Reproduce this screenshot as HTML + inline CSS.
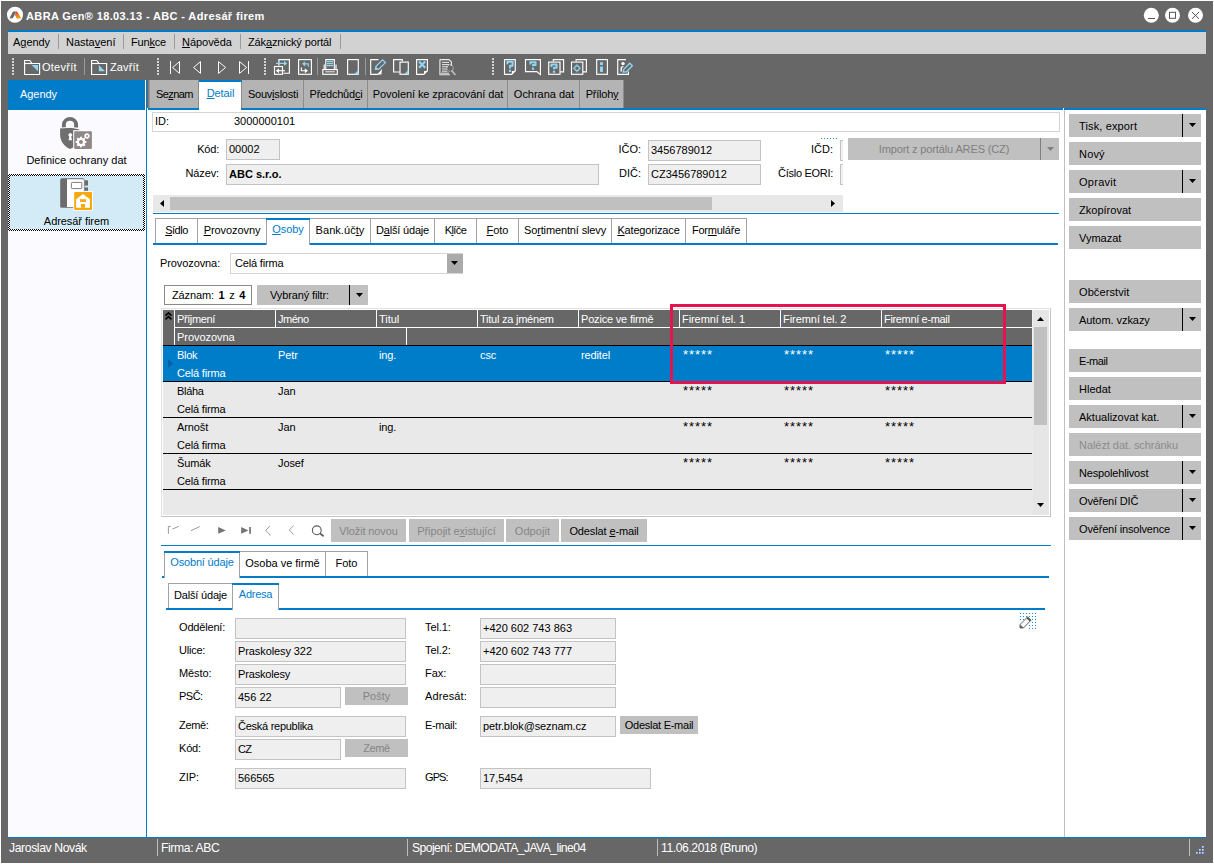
<!DOCTYPE html>
<html><head><meta charset="utf-8"><title>ABRA Gen</title><style>
html,body{margin:0;padding:0;}
body{width:1214px;height:864px;position:relative;overflow:hidden;background:#fff;font-family:"Liberation Sans",sans-serif;font-size:11px;line-height:13px;color:#000;}
.a{position:absolute;box-sizing:border-box;}
.t{position:absolute;white-space:pre;line-height:13px;height:13px;}
svg{position:absolute;overflow:visible;}
u{text-decoration:underline;text-underline-offset:1px;}
</style></head><body>
<div class="a " style="left:0px;top:0px;width:1214px;height:864px;background:#fff;"></div>
<div class="a " style="left:1px;top:1px;width:1212px;height:862px;background:#676767;"></div>
<div class="a " style="left:8px;top:30px;width:1198px;height:2px;background:#007cc9;"></div>
<div class="a " style="left:8px;top:32px;width:1198px;height:22px;background:#d2d2d2;"></div>
<div class="t" style="left:13px;top:36px;color:#000;letter-spacing:-0.051px;">A<u>g</u>endy</div>
<div class="t" style="left:66px;top:36px;color:#000;letter-spacing:-0.003px;">Nasta<u>v</u>ení</div>
<div class="t" style="left:131px;top:36px;color:#000;letter-spacing:-0.179px;">Fun<u>k</u>ce</div>
<div class="t" style="left:182px;top:36px;color:#000;letter-spacing:-0.044px;"><u>N</u>ápověda</div>
<div class="t" style="left:248px;top:36px;color:#000;letter-spacing:-0.129px;">Zák<u>a</u>znický portál</div>
<div class="a " style="left:58px;top:34px;width:1px;height:15px;background:#9a9a9a;"></div>
<div class="a " style="left:123px;top:34px;width:1px;height:15px;background:#9a9a9a;"></div>
<div class="a " style="left:174px;top:34px;width:1px;height:15px;background:#9a9a9a;"></div>
<div class="a " style="left:240px;top:34px;width:1px;height:15px;background:#9a9a9a;"></div>
<div class="a " style="left:340px;top:34px;width:1px;height:15px;background:#9a9a9a;"></div>
<div class="t" style="left:26px;top:10px;color:#fff;letter-spacing:0.37px;font-weight:bold;">ABRA Gen® 18.03.13 - ABC - Adresář firem</div>
<svg style="left:5px;top:5px" width="20" height="20" viewBox="5 5 20 20"><defs><linearGradient id="lg" x1="0" y1="0" x2="0.35" y2="1"><stop offset="0" stop-color="#e5007d"/><stop offset="0.45" stop-color="#f0701c"/><stop offset="1" stop-color="#f6a800"/></linearGradient></defs><circle cx="15" cy="14.8" r="8.05" fill="#fff"/><path d="M9.4 18.3 L13.1 11.6 H16.4 L12.8 18.3 Z" fill="#6a6a6a"/><path d="M16.4 11.6 L17.3 11.8 L21.1 18.3 L17 18.8 L14.9 15 Z" fill="url(#lg)"/></svg>
<svg style="left:1140px;top:4px" width="70" height="24" viewBox="1140 4 70 24" fill="none" stroke="#555" stroke-width="1"><circle cx="1151.3" cy="15.3" r="7.5" fill="#fff" stroke="none"/><path d="M1148 18.5 H1155"/><circle cx="1172.5" cy="15.3" r="7.5" fill="#fff" stroke="none"/><rect x="1169.5" y="12.3" width="6" height="6"/><circle cx="1195.5" cy="15.3" r="7.5" fill="#fff" stroke="none"/><path d="M1192 12 L1199 18.8 M1199 12 L1192 18.8"/></svg>
<div class="a" style="left:12px;top:58px;width:2px;height:17px;background:repeating-linear-gradient(to bottom,#d2d2d2 0 2px,transparent 2px 3px)"></div>
<div class="a" style="left:157px;top:58px;width:2px;height:17px;background:repeating-linear-gradient(to bottom,#d2d2d2 0 2px,transparent 2px 3px)"></div>
<div class="a" style="left:264px;top:58px;width:2px;height:17px;background:repeating-linear-gradient(to bottom,#d2d2d2 0 2px,transparent 2px 3px)"></div>
<div class="a" style="left:492px;top:58px;width:2px;height:17px;background:repeating-linear-gradient(to bottom,#d2d2d2 0 2px,transparent 2px 3px)"></div>
<div class="a " style="left:84px;top:58px;width:1px;height:17px;background:#9a9a9a;"></div>
<div class="a " style="left:317px;top:58px;width:1px;height:17px;background:#9a9a9a;"></div>
<div class="a " style="left:365px;top:58px;width:1px;height:17px;background:#9a9a9a;"></div>
<div class="t" style="left:42px;top:61px;color:#fff;letter-spacing:0.256px;">Otevřít</div>
<div class="t" style="left:110px;top:61px;color:#fff;letter-spacing:0.115px;">Zavřít</div>
<svg style="left:0;top:54px" width="1214" height="26" viewBox="0 54 1214 26" fill="none" stroke="#fff" stroke-width="1.15"><path d="M24.6 74.5 V60.5 H29.8 L32 63.5 H39.6 V74.5 Z"/><path d="M24.6 63.5 H32"/><path d="M31.6 65 H38 V71.2 Z" fill="#8fd6f6" stroke="none"/><path d="M91.6 74.5 V60.5 H96.8 L99 63.5 H106.6 V74.5 Z"/><path d="M91.6 63.5 H99"/><path d="M98.8 65 V71.2 H105 Z" fill="#8fd6f6" stroke="none"/><g stroke-width="1"><path d="M170.5 61 V74"/><path d="M179.5 61.6 L172.6 67.5 L179.5 73.4 Z"/><path d="M200.5 61.6 L193.6 67.5 L200.5 73.4 Z"/><path d="M218.5 61.6 L225.6 67.5 L218.5 73.4 Z"/><path d="M248.5 61 V74"/><path d="M239.5 61.6 L246.6 67.5 L239.5 73.4 Z"/></g><path d="M278.9 65.6 V59.6 H289.4 V73.2 H283.4"/><rect x="274.5" y="66.5" width="8" height="7.799999999999997"/><path d="M276 63.4 H285" stroke="#8fd6f6"/><path d="M284 60.8 L287.2 63.4 L284 66 Z" fill="#8fd6f6" stroke="none"/><path d="M278 70.7 H285"/><path d="M279 68.2 L275.8 70.7 L279 73.2 Z" fill="#fff" stroke="none"/><rect x="298.6" y="59.6" width="12.8" height="14.699999999999996"/><path d="M304.5 63.8 H308.3 V66.8" stroke="#8fd6f6"/><path d="M305.2 61.2 L302 63.8 L305.2 66.4 Z" fill="#8fd6f6" stroke="none"/><path d="M301.4 67.4 V70.7 H305.4"/><path d="M304.8 68.2 L308 70.7 L304.8 73.2 Z" fill="#fff" stroke="none"/><path d="M325.8 69 V59.6 H334.3 V69"/><path d="M327 61.6 H333 M327 63.6 H333 M327 65.6 H333" stroke="#8fd6f6" stroke-width="1.1"/><path d="M324.2 69 V64.4 M336 69 V64.4"/><rect x="322.8" y="69.6" width="14.5" height="4.700000000000003"/><path d="M325.3 71.8 H334.8" stroke-width="0.9"/><rect x="347.6" y="59.6" width="10.699999999999989" height="14.699999999999996"/><path d="M358.3 70.1 L354.1 74.3 H358.3 Z" fill="#8fd6f6" stroke="none"/><path d="M378.5 59.6 H370.7 V74.3 H377.8 L381.3 70.8 V69.5"/><path d="M377.6 74.5 L381.5 70.4 V74.5 Z" fill="#fff" stroke="none"/><path d="M375.4 69.4 L376 66.4 L382.6 59.8 L385.4 62.6 L378.8 69.2 Z" fill="none" stroke="#8fd6f6" stroke-width="1.3"/><path d="M375.2 69.6 L375.8 66.4 L378.6 69.2 Z" fill="#8fd6f6" stroke="none"/><path d="M399.6 72 H393.6 V59.6 H402.3 V61.6"/><rect x="400" y="62.1" width="8.300000000000011" height="12.199999999999996"/><path d="M408.3 70.1 L404.1 74.3 H408.3 Z" fill="#8fd6f6" stroke="none"/><path d="M416.6 59.6 H427.4 V70.7 L423.79999999999995 74.3 H416.6 Z"/><path d="M427.59999999999997 70.3 L423.4 74.5 H424.0 L424.0 70.89999999999999 H427.59999999999997 Z" fill="#fff" stroke="none"/><path d="M419 61.4 L425.2 67.8 M425.2 61.4 L419 67.8" stroke="#8fd6f6" stroke-width="2.2"/><g stroke="#e8e8e8"><path d="M439.9 59.6 H449 L451.4 62 V66"/><path d="M439.9 59.6 V74.7 H450"/><path d="M442 62.4 H449 M442 64.6 H449.4 M442 66.8 H448 M442 69 H447 M442 71.2 H447.4 M441 73.2 H449" stroke-width="1"/></g><circle cx="450" cy="68" r="3.2" stroke="#d8d8d8" stroke-width="0.9" stroke-dasharray="1.4 1"/><path d="M451.6 70.4 L455.4 75" stroke="#b9b9b9" stroke-width="1.8"/><path d="M504.5 59.6 H515.3 V70.7 L511.69999999999993 74.3 H504.5 Z"/><path d="M515.5 70.3 L511.29999999999995 74.5 H511.9 L511.9 70.89999999999999 H515.5 Z" fill="#fff" stroke="none"/><path d="M507.4 64.2 V61.8 H512.6 V65.84 H510 V68.4" stroke="#8fd6f6" stroke-width="2" stroke-linejoin="round"/><rect x="508.9" y="69.8" width="2.2" height="2.2" fill="#8fd6f6" stroke="none"/><path d="M525.5 59.6 H540.4 V74.6 L536.8 71.6 H525.5 Z"/><path d="M530.4 64.60000000000001 V62.2 H535.6 V65.07000000000001 H533 V66.2" stroke="#8fd6f6" stroke-width="2" stroke-linejoin="round"/><rect x="531.9" y="67.6" width="2.2" height="2.2" fill="#8fd6f6" stroke="none"/><path d="M553.3 61.6 V59.6 H563.6 V71.8 H560.1"/><rect x="548.7" y="62.1" width="11.3" height="12.199999999999996"/><path d="M551.4 67.0 V64.6 H556.6 V67.74 H554 V69.2" stroke="#8fd6f6" stroke-width="2" stroke-linejoin="round"/><rect x="552.9" y="70.6" width="2.2" height="2.2" fill="#8fd6f6" stroke="none"/><path d="M576.0999999999999 61.6 V59.6 H586.4 V71.8 H582.9"/><rect x="571.5" y="62.1" width="11.3" height="12.199999999999996"/><g stroke="#8fd6f6"><circle cx="577" cy="68.2" r="2.3"/><path d="M577 64.2 V65.6 M577 70.8 V72.2 M573 68.2 H574.4 M579.6 68.2 H581"/></g><rect x="596.7" y="59.6" width="10.7" height="14.699999999999996"/><rect x="600" y="62.2" width="3" height="2.8" fill="#8fd6f6" stroke="none"/><rect x="600" y="66.5" width="3" height="5.4" fill="#8fd6f6" stroke="none"/><path d="M626 59.6 H617.7 V74.3 H628.4 V71.5"/><circle cx="623" cy="63.6" r="1.7" fill="#fff" stroke="none"/><path d="M621.2 71.4 V68.6 Q621.2 66.6 623.4 66.6" stroke-width="1.4"/><path d="M623.2 72 L623.8 69.2 L629.8 63.2 L632.4 65.8 L626.4 71.8 Z" stroke="#8fd6f6" stroke-width="1.3"/></svg>
<div class="a " style="left:8px;top:80px;width:137px;height:30px;background:#007cc9;"></div>
<div class="t" style="left:20px;top:88px;color:#fff;letter-spacing:-0.051px;">Agendy</div>
<div class="a " style="left:8px;top:110px;width:137px;height:727px;background:#fafaff;"></div>
<div class="a " style="left:145px;top:80px;width:1px;height:757px;background:#fff;"></div>
<div class="a " style="left:146px;top:80px;width:1px;height:758px;background:#007cc9;"></div>
<div class="a " style="left:147px;top:108px;width:1px;height:729px;background:#fff;"></div>
<div class="a " style="left:8px;top:174px;width:137px;height:57px;background:repeating-conic-gradient(#000 0 25%,#fff 0 50%) 0 0/2px 2px;"></div>
<div class="a " style="left:10px;top:176px;width:133px;height:53px;background:#d3ebf6;"></div>
<svg style="left:58px;top:114px" width="36" height="36" viewBox="58 114 36 36"><path d="M63.9 128 V124.6 A6.1 5.7 0 0 1 76.1 124.6 V128" fill="none" stroke="#6f6f6f" stroke-width="3.9"/><path d="M60.1 128.6 Q69.5 126.2 79.2 129.4 L79.2 140 Q77 146.4 70 148.9 C64 146.6 60.1 141 60.1 134.5 Z" fill="#6f6f6f"/><path d="M62 127.9 Q70 126.6 78 128.2" stroke="#fff" stroke-width="0.9" fill="none"/><path d="M68.6 140.2 L69.3 136.6 A1.9 1.9 0 1 1 71.3 136.6 L72 140.2 Z" fill="#fff"/><rect x="73.2" y="130.2" width="19.4" height="19.4" fill="#fff"/><rect x="74.2" y="131.2" width="17.7" height="17.7" rx="0.8" fill="#8f8687"/><g transform="translate(81,142)"><circle r="3.1" fill="none" stroke="#fff" stroke-width="2.2"/><rect x="-1" y="-5.3" width="2" height="2.2" fill="#fff" transform="rotate(0)"/><rect x="-1" y="-5.3" width="2" height="2.2" fill="#fff" transform="rotate(45)"/><rect x="-1" y="-5.3" width="2" height="2.2" fill="#fff" transform="rotate(90)"/><rect x="-1" y="-5.3" width="2" height="2.2" fill="#fff" transform="rotate(135)"/><rect x="-1" y="-5.3" width="2" height="2.2" fill="#fff" transform="rotate(180)"/><rect x="-1" y="-5.3" width="2" height="2.2" fill="#fff" transform="rotate(225)"/><rect x="-1" y="-5.3" width="2" height="2.2" fill="#fff" transform="rotate(270)"/><rect x="-1" y="-5.3" width="2" height="2.2" fill="#fff" transform="rotate(315)"/></g><g transform="translate(87,136)"><circle r="1.7" fill="none" stroke="#fff" stroke-width="1.5"/><rect x="-0.5" y="-3" width="1" height="1" fill="#fff" transform="rotate(0)"/><rect x="-0.5" y="-3" width="1" height="1" fill="#fff" transform="rotate(45)"/><rect x="-0.5" y="-3" width="1" height="1" fill="#fff" transform="rotate(90)"/><rect x="-0.5" y="-3" width="1" height="1" fill="#fff" transform="rotate(135)"/><rect x="-0.5" y="-3" width="1" height="1" fill="#fff" transform="rotate(180)"/><rect x="-0.5" y="-3" width="1" height="1" fill="#fff" transform="rotate(225)"/><rect x="-0.5" y="-3" width="1" height="1" fill="#fff" transform="rotate(270)"/><rect x="-0.5" y="-3" width="1" height="1" fill="#fff" transform="rotate(315)"/></g></svg>
<svg style="left:58px;top:176px" width="36" height="36" viewBox="58 176 36 36"><rect x="60.2" y="178.3" width="24.3" height="29.5" rx="1.6" fill="#6d6d6d"/><path d="M67 179.3 H83 Q83.9 179.3 83.9 180.4 V207.1 H67 Z" fill="#fff"/><rect x="84.5" y="180.3" width="3.5" height="5.3" fill="#6d6d6d"/><rect x="84.5" y="187.4" width="3.5" height="3.4" fill="#6d6d6d"/><rect x="71.4" y="182.4" width="10.4" height="6.2" rx="0.9" fill="#fff" stroke="#6d6d6d" stroke-width="0.9"/><rect x="73.2" y="191.2" width="19.6" height="19.4" fill="#fff"/><rect x="74.2" y="192.1" width="17.8" height="17.8" rx="0.9" fill="#f5a90f"/><path d="M83 194 L89.9 199.3 V207.8 H76.1 V199.3 Z" fill="#fff"/><rect x="80" y="199.2" width="6" height="2.7" fill="#f5a90f"/><rect x="81" y="204" width="4" height="3.8" fill="#f5a90f"/></svg>
<div class="t" style="left:8px;top:154px;color:#000;width:137px;text-align:center;letter-spacing:-0.009px;">Definice ochrany dat</div>
<div class="t" style="left:8px;top:215px;color:#000;width:137px;text-align:center;letter-spacing:-0.055px;">Adresář firem</div>
<div class="a " style="left:148px;top:80px;width:476px;height:28px;background:#b4b4b4;"></div>
<div class="a " style="left:148px;top:80px;width:1px;height:28px;background:#7c7c7c;"></div>
<div class="a " style="left:149px;top:80px;width:1px;height:28px;background:#969696;"></div>
<div class="t" style="left:150px;top:88px;color:#000;width:49px;text-align:center;letter-spacing:-0.592px;">Se<u>z</u>nam</div>
<div class="a " style="left:198px;top:80px;width:1px;height:28px;background:#8c8c8c;"></div>
<div class="a " style="left:199px;top:80px;width:42px;height:30px;background:#fff;"></div>
<div class="a " style="left:199px;top:80px;width:43px;height:2px;background:#007cc9;"></div>
<div class="a " style="left:241px;top:82px;width:1px;height:26px;background:#8c8c8c;"></div>
<div class="t" style="left:199px;top:87px;color:#007cc9;width:43px;text-align:center;letter-spacing:-0.087px;"><u>D</u>etail</div>
<div class="t" style="left:242px;top:88px;color:#000;width:62px;text-align:center;letter-spacing:-0.216px;">Souv<u>i</u>slosti</div>
<div class="a " style="left:303px;top:80px;width:1px;height:28px;background:#8c8c8c;"></div>
<div class="t" style="left:304px;top:88px;color:#000;width:64px;text-align:center;letter-spacing:-0.213px;">Předchůd<u>c</u>i</div>
<div class="a " style="left:367px;top:80px;width:1px;height:28px;background:#8c8c8c;"></div>
<div class="t" style="left:368px;top:88px;color:#000;width:140px;text-align:center;letter-spacing:-0.092px;">Povolení ke zpracování dat</div>
<div class="a " style="left:507px;top:80px;width:1px;height:28px;background:#8c8c8c;"></div>
<div class="t" style="left:508px;top:88px;color:#000;width:72px;text-align:center;letter-spacing:-0.022px;">Ochrana dat</div>
<div class="a " style="left:579px;top:80px;width:1px;height:28px;background:#8c8c8c;"></div>
<div class="t" style="left:580px;top:88px;color:#000;width:44px;text-align:center;letter-spacing:-0.234px;">Příloh<u>y</u></div>
<div class="a " style="left:623px;top:80px;width:1px;height:28px;background:#8c8c8c;"></div>
<div class="a " style="left:148px;top:110px;width:916px;height:727px;background:#fff;"></div>
<div class="a " style="left:148px;top:108px;width:51px;height:2px;background:#007cc9;"></div>
<div class="a " style="left:242px;top:108px;width:821px;height:2px;background:#007cc9;"></div>
<div class="a " style="left:1063px;top:108px;width:1px;height:2px;background:#fff;"></div>
<div class="a " style="left:1064px;top:108px;width:142px;height:2px;background:#007cc9;"></div>
<div class="a " style="left:1065px;top:110px;width:141px;height:727px;background:#fff;"></div>
<div class="a " style="left:1064px;top:110px;width:1px;height:727px;background:#c0c0c0;"></div>
<div class="a " style="left:8px;top:837px;width:1198px;height:1px;background:#007cc9;"></div>
<div class="a " style="left:1px;top:838px;width:1212px;height:25px;background:#676767;"></div>
<div class="t" style="left:9px;top:842px;color:#fff;letter-spacing:-0.393px;font-size:12.2px;">Jaroslav Novák</div>
<div class="t" style="left:161px;top:842px;color:#fff;letter-spacing:-0.396px;font-size:12.2px;">Firma: ABC</div>
<div class="t" style="left:412px;top:842px;color:#fff;letter-spacing:-0.569px;font-size:12.2px;">Spojení: DEMODATA_JAVA_line04</div>
<div class="t" style="left:661px;top:842px;color:#fff;letter-spacing:-0.44px;font-size:12.2px;">11.06.2018 (Bruno)</div>
<div class="a " style="left:157px;top:839px;width:1px;height:17px;background:#bdbdbd;"></div>
<div class="a " style="left:407px;top:839px;width:1px;height:17px;background:#bdbdbd;"></div>
<div class="a " style="left:657px;top:839px;width:1px;height:17px;background:#bdbdbd;"></div>
<div class="a " style="left:1189px;top:839px;width:1px;height:17px;background:#bdbdbd;"></div>
<svg style="left:1196px;top:846px" width="8" height="8" viewBox="0 0 8 8"><defs><linearGradient id="gd" x1="0" y1="0" x2="1" y2="1"><stop offset="0" stop-color="#f4f8ff"/><stop offset="1" stop-color="#4f74f2"/></linearGradient></defs><g fill="url(#gd)"><rect x="6" y="0" width="2" height="2"/><rect x="3" y="3" width="2" height="2"/><rect x="6" y="3" width="2" height="2"/><rect x="0" y="6" width="2" height="2"/><rect x="3" y="6" width="2" height="2"/><rect x="6" y="6" width="2" height="2"/></g></svg>
<div class="a " style="left:152px;top:112px;width:908px;height:20px;background:#fff;border:1px solid #d4d4d4;"></div>
<div class="t" style="left:155px;top:115px;color:#000;letter-spacing:0px;">ID:</div>
<div class="t" style="left:234px;top:115px;color:#000;letter-spacing:0px;">3000000101</div>
<div class="t" style="left:150px;top:143px;color:#000;width:69px;text-align:right;letter-spacing:-0.207px;">Kód:</div>
<div class="a " style="left:226px;top:139px;width:54px;height:21px;background:#efefef;border:1px solid #c3c3c3;"></div>
<div class="t" style="left:229px;top:143px;color:#000;letter-spacing:0px;">00002</div>
<div class="t" style="left:150px;top:167px;color:#000;width:69px;text-align:right;letter-spacing:-0.12px;">Název:</div>
<div class="a " style="left:226px;top:164px;width:373px;height:21px;background:#efefef;border:1px solid #c3c3c3;"></div>
<div class="t" style="left:229px;top:168px;color:#000;font-weight:bold;">ABC s.r.o.</div>
<div class="t" style="left:571px;top:143px;color:#000;width:70px;text-align:right;letter-spacing:0px;">IČO:</div>
<div class="a " style="left:648px;top:140px;width:113px;height:21px;background:#efefef;border:1px solid #c3c3c3;"></div>
<div class="t" style="left:651px;top:144px;color:#000;letter-spacing:0px;">3456789012</div>
<div class="t" style="left:571px;top:167px;color:#000;width:70px;text-align:right;letter-spacing:0px;">DIČ:</div>
<div class="a " style="left:648px;top:164px;width:113px;height:21px;background:#efefef;border:1px solid #c3c3c3;"></div>
<div class="t" style="left:651px;top:168px;color:#000;letter-spacing:0px;">CZ3456789012</div>
<div class="t" style="left:760px;top:143px;color:#000;width:73px;text-align:right;letter-spacing:0px;">IČD:</div>
<div class="t" style="left:760px;top:167px;color:#000;width:73px;text-align:right;letter-spacing:-0.288px;">Číslo EORI:</div>
<div class="a " style="left:840px;top:140px;width:3px;height:21px;background:#efefef;border-left:1px solid #c3c3c3;border-top:1px solid #c3c3c3;border-bottom:1px solid #c3c3c3;"></div>
<div class="a " style="left:840px;top:164px;width:3px;height:21px;background:#efefef;border-left:1px solid #c3c3c3;border-top:1px solid #c3c3c3;border-bottom:1px solid #c3c3c3;"></div>
<div class="a" style="left:821px;top:138px;width:16px;height:1px;background:repeating-linear-gradient(to right,#1b8ad8 0 1px,transparent 1px 3px)"></div>
<div class="a " style="left:848px;top:138px;width:211px;height:22px;background:#c0c0c0;"></div>
<div class="t" style="left:848px;top:143px;color:#7f7f7f;width:192px;text-align:center;letter-spacing:-0.13px;">Import z portálu ARES (CZ)</div>
<div class="a " style="left:1040px;top:138px;width:1px;height:22px;background:#7f7f7f;"></div>
<svg style="left:1047px;top:147px" width="7" height="4" viewBox="0 0 7 4"><path d="M0 0 H7 L3.5 4 Z" fill="#7f7f7f"/></svg>
<div class="a " style="left:153px;top:195px;width:690px;height:17px;background:#e8e8e8;"></div>
<div class="a " style="left:170px;top:197px;width:542px;height:13px;background:#c0c0c0;"></div>
<svg style="left:160px;top:200px" width="4" height="7" viewBox="0 0 4 7"><path d="M4 0 V7 L0 3.5 Z" fill="#000"/></svg>
<svg style="left:831px;top:200px" width="4" height="7" viewBox="0 0 4 7"><path d="M0 0 V7 L4 3.5 Z" fill="#000"/></svg>
<div class="a " style="left:153px;top:213px;width:906px;height:1px;background:#007cc9;"></div>
<div class="a " style="left:155px;top:218px;width:43px;height:25px;background:#fff;border:1px solid #a2a2a2;border-bottom:none;"></div>
<div class="t" style="left:155px;top:224px;color:#000;width:43px;text-align:center;letter-spacing:-0.514px;"><u>S</u>ídlo</div>
<div class="a " style="left:197px;top:218px;width:70px;height:25px;background:#fff;border:1px solid #a2a2a2;border-bottom:none;"></div>
<div class="t" style="left:197px;top:224px;color:#000;width:70px;text-align:center;letter-spacing:-0.077px;"><u>P</u>rovozovny</div>
<div class="a " style="left:309px;top:218px;width:62px;height:25px;background:#fff;border:1px solid #a2a2a2;border-bottom:none;"></div>
<div class="t" style="left:309px;top:224px;color:#000;width:62px;text-align:center;letter-spacing:0.055px;">Bank.úč<u>t</u>y</div>
<div class="a " style="left:370px;top:218px;width:65px;height:25px;background:#fff;border:1px solid #a2a2a2;border-bottom:none;"></div>
<div class="t" style="left:370px;top:224px;color:#000;width:65px;text-align:center;letter-spacing:-0.176px;">D<u>a</u>lší údaje</div>
<div class="a " style="left:434px;top:218px;width:43px;height:25px;background:#fff;border:1px solid #a2a2a2;border-bottom:none;"></div>
<div class="t" style="left:434px;top:224px;color:#000;width:43px;text-align:center;letter-spacing:-0.611px;">K<u>l</u>íče</div>
<div class="a " style="left:476px;top:218px;width:43px;height:25px;background:#fff;border:1px solid #a2a2a2;border-bottom:none;"></div>
<div class="t" style="left:476px;top:224px;color:#000;width:43px;text-align:center;letter-spacing:-0.053px;"><u>F</u>oto</div>
<div class="a " style="left:518px;top:218px;width:94px;height:25px;background:#fff;border:1px solid #a2a2a2;border-bottom:none;"></div>
<div class="t" style="left:518px;top:224px;color:#000;width:94px;text-align:center;letter-spacing:-0.139px;">So<u>r</u>timentní slevy</div>
<div class="a " style="left:611px;top:218px;width:75px;height:25px;background:#fff;border:1px solid #a2a2a2;border-bottom:none;"></div>
<div class="t" style="left:611px;top:224px;color:#000;width:75px;text-align:center;letter-spacing:-0.167px;"><u>K</u>ategorizace</div>
<div class="a " style="left:685px;top:218px;width:62px;height:25px;background:#fff;border:1px solid #a2a2a2;border-bottom:none;"></div>
<div class="t" style="left:685px;top:224px;color:#000;width:62px;text-align:center;letter-spacing:-0.214px;">For<u>m</u>uláře</div>
<div class="a " style="left:153px;top:243px;width:905px;height:2px;background:#007cc9;"></div>
<div class="a " style="left:266px;top:218px;width:44px;height:27px;background:#fff;border-right:1px solid #a2a2a2;border-left:1px solid #a2a2a2;"></div>
<div class="a " style="left:266px;top:218px;width:44px;height:2px;background:#007cc9;"></div>
<div class="t" style="left:266px;top:223px;color:#007cc9;width:44px;text-align:center;letter-spacing:-0.018px;"><u>O</u>soby</div>
<div class="t" style="left:160px;top:257px;color:#000;letter-spacing:-0.095px;">Provozovna:</div>
<div class="a " style="left:230px;top:253px;width:233px;height:21px;background:#fff;border:1px solid #d4d4d4;"></div>
<div class="t" style="left:235px;top:257px;color:#000;letter-spacing:-0.172px;">Celá firma</div>
<div class="a " style="left:447px;top:254px;width:16px;height:19px;background:#ababab;"></div>
<svg style="left:451px;top:261px" width="7" height="4" viewBox="0 0 7 4"><path d="M0 0 H7 L3.5 4 Z" fill="#000"/></svg>
<div class="a " style="left:164px;top:285px;width:88px;height:20px;background:#fff;border:1px solid #8a8a8a;"></div>
<div class="t" style="left:172px;top:289px;color:#000;letter-spacing:-0.12px;word-spacing:1.7px;">Záznam: <b>1</b> z <b>4</b></div>
<div class="a " style="left:257px;top:285px;width:111px;height:20px;background:#c0c0c0;"></div>
<div class="t" style="left:270px;top:289px;color:#000;letter-spacing:-0.12px;">Vybraný filtr:</div>
<div class="a " style="left:349px;top:285px;width:1px;height:20px;background:#000;"></div>
<svg style="left:356px;top:293px" width="7" height="4" viewBox="0 0 7 4"><path d="M0 0 H7 L3.5 4 Z" fill="#000"/></svg>
<div class="a " style="left:161px;top:308px;width:890px;height:209px;background:#fff;border:1px solid #c4c4c4;border-top-color:#e2e2e2;border-left-color:#e2e2e2;"></div>
<div class="a " style="left:163px;top:310px;width:886px;height:205px;background:#e9e9e9;"></div>
<div class="a " style="left:163px;top:310px;width:869px;height:35px;background:#676767;"></div>
<div class="a " style="left:174px;top:310px;width:1px;height:18px;background:#fff;"></div>
<div class="t" style="left:177px;top:313px;color:#fff;letter-spacing:-0.394px;">Příjmení</div>
<div class="a " style="left:275px;top:310px;width:1px;height:18px;background:#fff;"></div>
<div class="t" style="left:278px;top:313px;color:#fff;letter-spacing:-0.503px;">Jméno</div>
<div class="a " style="left:376px;top:310px;width:1px;height:18px;background:#fff;"></div>
<div class="t" style="left:379px;top:313px;color:#fff;letter-spacing:-0.055px;">Titul</div>
<div class="a " style="left:477px;top:310px;width:1px;height:18px;background:#fff;"></div>
<div class="t" style="left:480px;top:313px;color:#fff;letter-spacing:-0.235px;">Titul za jménem</div>
<div class="a " style="left:578px;top:310px;width:1px;height:18px;background:#fff;"></div>
<div class="t" style="left:581px;top:313px;color:#fff;letter-spacing:-0.186px;">Pozice ve firmě</div>
<div class="a " style="left:679px;top:310px;width:1px;height:18px;background:#fff;"></div>
<div class="t" style="left:682px;top:313px;color:#fff;letter-spacing:-0.077px;">Firemní tel. 1</div>
<div class="a " style="left:780px;top:310px;width:1px;height:18px;background:#fff;"></div>
<div class="t" style="left:783px;top:313px;color:#fff;letter-spacing:-0.056px;">Firemní tel. 2</div>
<div class="a " style="left:881px;top:310px;width:1px;height:18px;background:#fff;"></div>
<div class="t" style="left:884px;top:313px;color:#fff;letter-spacing:-0.342px;">Firemní e-mail</div>
<div class="a " style="left:174px;top:327px;width:858px;height:1px;background:#fff;"></div>
<div class="a " style="left:174px;top:328px;width:1px;height:17px;background:#fff;"></div>
<div class="a " style="left:406px;top:328px;width:1px;height:17px;background:#fff;"></div>
<div class="t" style="left:177px;top:331px;color:#fff;letter-spacing:-0.049px;">Provozovna</div>
<svg style="left:165px;top:312px" width="7" height="8" viewBox="0 0 7 8" fill="none" stroke="#000" stroke-width="1.7"><path d="M0.5 3.6 L3.5 0.8 L6.5 3.6 M0.5 7.4 L3.5 4.6 L6.5 7.4"/></svg>
<div class="a " style="left:163px;top:345px;width:869px;height:1px;background:#000;"></div>
<div class="a " style="left:163px;top:346px;width:869px;height:35px;background:#007dc8;"></div>
<svg style="left:168px;top:359px" width="5" height="9" viewBox="0 0 5 9"><path d="M0 0 L5 4.5 L0 9 Z" fill="#0a5fa0"/></svg>
<div class="a " style="left:163px;top:381px;width:869px;height:1px;background:#000;"></div>
<div class="t" style="left:177px;top:349px;color:#fff;letter-spacing:-0.325px;">Blok</div>
<div class="t" style="left:278px;top:349px;color:#fff;letter-spacing:-0.093px;">Petr</div>
<div class="t" style="left:379px;top:349px;color:#fff;letter-spacing:-0.12px;">ing.</div>
<div class="t" style="left:480px;top:349px;color:#fff;letter-spacing:-0.12px;">csc</div>
<div class="t" style="left:581px;top:349px;color:#fff;letter-spacing:-0.12px;">reditel</div>
<div class="t" style="left:177px;top:367px;color:#fff;letter-spacing:-0.172px;">Celá firma</div>
<div class="t" style="left:683px;top:348px;color:#fff;letter-spacing:0.94px;font-size:13px;">*****</div>
<div class="t" style="left:784px;top:348px;color:#fff;letter-spacing:0.94px;font-size:13px;">*****</div>
<div class="t" style="left:885px;top:348px;color:#fff;letter-spacing:0.94px;font-size:13px;">*****</div>
<div class="a " style="left:163px;top:417px;width:869px;height:1px;background:#000;"></div>
<div class="t" style="left:177px;top:385px;color:#000;letter-spacing:-0.287px;">Bláha</div>
<div class="t" style="left:278px;top:385px;color:#000;letter-spacing:-0.045px;">Jan</div>
<div class="t" style="left:177px;top:403px;color:#000;letter-spacing:-0.172px;">Celá firma</div>
<div class="t" style="left:683px;top:384px;color:#000;letter-spacing:0.94px;font-size:13px;">*****</div>
<div class="t" style="left:784px;top:384px;color:#000;letter-spacing:0.94px;font-size:13px;">*****</div>
<div class="t" style="left:885px;top:384px;color:#000;letter-spacing:0.94px;font-size:13px;">*****</div>
<div class="a " style="left:163px;top:453px;width:869px;height:1px;background:#000;"></div>
<div class="t" style="left:177px;top:421px;color:#000;letter-spacing:-0.12px;">Arnošt</div>
<div class="t" style="left:278px;top:421px;color:#000;letter-spacing:-0.045px;">Jan</div>
<div class="t" style="left:379px;top:421px;color:#000;letter-spacing:-0.12px;">ing.</div>
<div class="t" style="left:177px;top:439px;color:#000;letter-spacing:-0.172px;">Celá firma</div>
<div class="t" style="left:683px;top:420px;color:#000;letter-spacing:0.94px;font-size:13px;">*****</div>
<div class="t" style="left:784px;top:420px;color:#000;letter-spacing:0.94px;font-size:13px;">*****</div>
<div class="t" style="left:885px;top:420px;color:#000;letter-spacing:0.94px;font-size:13px;">*****</div>
<div class="a " style="left:163px;top:489px;width:869px;height:1px;background:#000;"></div>
<div class="t" style="left:177px;top:457px;color:#000;letter-spacing:-0.12px;">Šumák</div>
<div class="t" style="left:278px;top:457px;color:#000;letter-spacing:-0.12px;">Josef</div>
<div class="t" style="left:177px;top:475px;color:#000;letter-spacing:-0.172px;">Celá firma</div>
<div class="t" style="left:683px;top:456px;color:#000;letter-spacing:0.94px;font-size:13px;">*****</div>
<div class="t" style="left:784px;top:456px;color:#000;letter-spacing:0.94px;font-size:13px;">*****</div>
<div class="t" style="left:885px;top:456px;color:#000;letter-spacing:0.94px;font-size:13px;">*****</div>
<div class="a " style="left:1032px;top:310px;width:1px;height:36px;background:#f0f0f0;"></div>
<div class="a " style="left:1033px;top:310px;width:16px;height:205px;background:#e6e6e6;"></div>
<div class="a " style="left:1034px;top:327px;width:13px;height:98px;background:#c0c0c0;"></div>
<svg style="left:1037px;top:317px" width="7" height="4" viewBox="0 0 7 4"><path d="M0 4 H7 L3.5 0 Z" fill="#000"/></svg>
<svg style="left:1037px;top:503px" width="7" height="4" viewBox="0 0 7 4"><path d="M0 0 H7 L3.5 4 Z" fill="#000"/></svg>
<div class="a " style="left:670px;top:304px;width:336px;height:80px;border:3px solid #e5134f;"></div>
<svg style="left:160px;top:518px" width="172" height="26" viewBox="160 518 172 26" fill="none" stroke="#8e8e8e" stroke-width="0.9"><path d="M168.4 533.8 V526.4 H170.8 M172.4 529 L178.8 526.4"/><path d="M191 530.7 L199.8 526.5"/><path d="M218.2 527 L225.8 530.4 L218.2 533.8 Z" fill="#747474" stroke="none"/><path d="M241.2 527 L248.4 530.4 L241.2 533.8 Z" fill="#747474" stroke="none"/><rect x="249.2" y="527" width="1.7" height="6.8" fill="#747474" stroke="none"/><path d="M269.8 526 L265.6 530.6 L268.6 533.2 L270.4 535.6"/><path d="M293.7 525.6 L289.2 530 L293.7 534.6"/><circle cx="316.8" cy="530.3" r="4.4" stroke="#5a5a5a" stroke-width="1.1"/><path d="M319.9 533.4 L323.6 536.2" stroke="#5a5a5a" stroke-width="1.8"/></svg>
<div class="a " style="left:331px;top:519px;width:75px;height:23px;background:#c0c0c0;"></div>
<div class="t" style="left:331px;top:525px;color:#858585;width:75px;text-align:center;letter-spacing:-0.127px;">Vložit novou</div>
<div class="a " style="left:409px;top:519px;width:95px;height:23px;background:#c0c0c0;"></div>
<div class="t" style="left:409px;top:525px;color:#858585;width:95px;text-align:center;letter-spacing:-0.046px;">Připojit e<u>x</u>istující</div>
<div class="a " style="left:506px;top:519px;width:53px;height:23px;background:#c0c0c0;"></div>
<div class="t" style="left:506px;top:525px;color:#858585;width:53px;text-align:center;letter-spacing:0.078px;">Odpo<u>j</u>it</div>
<div class="a " style="left:561px;top:519px;width:86px;height:23px;background:#c0c0c0;"></div>
<div class="t" style="left:561px;top:525px;color:#000;width:86px;text-align:center;letter-spacing:-0.122px;">Odeslat <u>e</u>-mail</div>
<div class="a " style="left:161px;top:545px;width:890px;height:1px;background:#007cc9;"></div>
<div class="a " style="left:239px;top:551px;width:87px;height:25px;background:#fff;border:1px solid #a2a2a2;border-bottom:none;"></div>
<div class="t" style="left:239px;top:557px;color:#000;width:87px;text-align:center;letter-spacing:-0.013px;">Osoba ve firmě</div>
<div class="a " style="left:325px;top:551px;width:43px;height:25px;background:#fff;border:1px solid #a2a2a2;border-bottom:none;"></div>
<div class="t" style="left:325px;top:557px;color:#000;width:43px;text-align:center;letter-spacing:-0.053px;">Foto</div>
<div class="a " style="left:162px;top:576px;width:887px;height:2px;background:#007cc9;"></div>
<div class="a " style="left:164px;top:551px;width:76px;height:27px;background:#fff;border-right:1px solid #a2a2a2;border-left:1px solid #a2a2a2;"></div>
<div class="a " style="left:164px;top:551px;width:76px;height:2px;background:#007cc9;"></div>
<div class="t" style="left:164px;top:556px;color:#007cc9;width:76px;text-align:center;letter-spacing:-0.178px;">Osobní údaje</div>
<div class="a " style="left:168px;top:583px;width:65px;height:25px;background:#fff;border:1px solid #a2a2a2;border-bottom:none;"></div>
<div class="t" style="left:168px;top:589px;color:#000;width:65px;text-align:center;letter-spacing:-0.176px;">Další údaje</div>
<div class="a " style="left:166px;top:608px;width:879px;height:2px;background:#007cc9;"></div>
<div class="a " style="left:232px;top:583px;width:47px;height:27px;background:#fff;border-right:1px solid #a2a2a2;border-left:1px solid #a2a2a2;"></div>
<div class="a " style="left:232px;top:583px;width:47px;height:2px;background:#007cc9;"></div>
<div class="t" style="left:232px;top:588px;color:#007cc9;width:47px;text-align:center;letter-spacing:-0.242px;">Adresa</div>
<svg style="left:1018px;top:611px" width="22" height="22" viewBox="1018 611 22 22"><g fill="#1b8ad8"><rect x="1020" y="613" width="1" height="1"/><rect x="1020" y="616" width="1" height="1"/><rect x="1020" y="619" width="1" height="1"/><rect x="1023" y="613" width="1" height="1"/><rect x="1023" y="616" width="1" height="1"/><rect x="1023" y="619" width="1" height="1"/><rect x="1026" y="613" width="1" height="1"/><rect x="1026" y="616" width="1" height="1"/><rect x="1026" y="619" width="1" height="1"/><rect x="1029" y="613" width="1" height="1"/><rect x="1029" y="616" width="1" height="1"/><rect x="1029" y="619" width="1" height="1"/><rect x="1029" y="625" width="1" height="1"/><rect x="1029" y="628" width="1" height="1"/><rect x="1032" y="613" width="1" height="1"/><rect x="1032" y="616" width="1" height="1"/><rect x="1032" y="619" width="1" height="1"/><rect x="1032" y="622" width="1" height="1"/><rect x="1032" y="625" width="1" height="1"/><rect x="1032" y="628" width="1" height="1"/><rect x="1035" y="613" width="1" height="1"/><rect x="1035" y="616" width="1" height="1"/><rect x="1035" y="619" width="1" height="1"/><rect x="1035" y="622" width="1" height="1"/><rect x="1035" y="625" width="1" height="1"/><rect x="1035" y="628" width="1" height="1"/></g><path d="M1020 628 L1020.1 624.4 L1027.6 617 L1031 620.2 L1023.6 627.9 Z" fill="#fafafa" stroke="#555" stroke-width="0.9"/><path d="M1020 628 L1020 624.2 L1023.8 628 Z" fill="#666"/><path d="M1026.4 618.2 L1027.8 616.8 L1031.2 620.2 L1029.8 621.6 Z" fill="#5a5a5a"/></svg>
<div class="t" style="left:179px;top:621px;color:#000;letter-spacing:-0.178px;">Oddělení:</div>
<div class="t" style="left:179px;top:644px;color:#000;letter-spacing:-0.234px;">Ulice:</div>
<div class="t" style="left:179px;top:667px;color:#000;letter-spacing:-0.085px;">Město:</div>
<div class="t" style="left:179px;top:690px;color:#000;letter-spacing:-0.518px;">PSČ:</div>
<div class="t" style="left:179px;top:719px;color:#000;letter-spacing:-0.315px;">Země:</div>
<div class="t" style="left:179px;top:742px;color:#000;letter-spacing:-0.207px;">Kód:</div>
<div class="t" style="left:179px;top:771px;color:#000;letter-spacing:-0.017px;">ZIP:</div>
<div class="a " style="left:235px;top:618px;width:171px;height:21px;background:#efefef;border:1px solid #c3c3c3;"></div>
<div class="a " style="left:235px;top:641px;width:171px;height:21px;background:#efefef;border:1px solid #c3c3c3;"></div>
<div class="t" style="left:238px;top:645px;color:#000;letter-spacing:-0.093px;">Praskolesy 322</div>
<div class="a " style="left:235px;top:664px;width:171px;height:21px;background:#efefef;border:1px solid #c3c3c3;"></div>
<div class="t" style="left:238px;top:668px;color:#000;letter-spacing:-0.16px;">Praskolesy</div>
<div class="a " style="left:235px;top:687px;width:106px;height:21px;background:#efefef;border:1px solid #c3c3c3;"></div>
<div class="t" style="left:238px;top:691px;color:#000;letter-spacing:0px;">456 22</div>
<div class="a " style="left:345px;top:687px;width:63px;height:18px;background:#c0c0c0;"></div>
<div class="t" style="left:345px;top:690px;color:#858585;width:63px;text-align:center;letter-spacing:-0.002px;">Pošty</div>
<div class="a " style="left:235px;top:716px;width:171px;height:21px;background:#efefef;border:1px solid #c3c3c3;"></div>
<div class="t" style="left:238px;top:720px;color:#000;letter-spacing:-0.265px;">Česká republika</div>
<div class="a " style="left:235px;top:739px;width:106px;height:21px;background:#efefef;border:1px solid #c3c3c3;"></div>
<div class="t" style="left:238px;top:743px;color:#000;letter-spacing:-0.782px;">CZ</div>
<div class="a " style="left:345px;top:739px;width:63px;height:18px;background:#c0c0c0;"></div>
<div class="t" style="left:345px;top:742px;color:#858585;width:63px;text-align:center;letter-spacing:-0.379px;">Země</div>
<div class="a " style="left:235px;top:768px;width:171px;height:21px;background:#efefef;border:1px solid #c3c3c3;"></div>
<div class="t" style="left:238px;top:772px;color:#000;letter-spacing:-0.051px;">566565</div>
<div class="t" style="left:425px;top:621px;color:#000;letter-spacing:-0.12px;">Tel.1:</div>
<div class="t" style="left:425px;top:644px;color:#000;letter-spacing:-0.12px;">Tel.2:</div>
<div class="t" style="left:425px;top:667px;color:#000;letter-spacing:-0.023px;">Fax:</div>
<div class="t" style="left:425px;top:690px;color:#000;letter-spacing:0.104px;">Adresát:</div>
<div class="t" style="left:425px;top:719px;color:#000;letter-spacing:-0.318px;">E-mail:</div>
<div class="t" style="left:425px;top:771px;color:#000;letter-spacing:-0.922px;">GPS:</div>
<div class="a " style="left:480px;top:618px;width:136px;height:21px;background:#efefef;border:1px solid #c3c3c3;"></div>
<div class="t" style="left:483px;top:622px;color:#000;letter-spacing:0px;">+420 602 743 863</div>
<div class="a " style="left:480px;top:641px;width:136px;height:21px;background:#efefef;border:1px solid #c3c3c3;"></div>
<div class="t" style="left:483px;top:645px;color:#000;letter-spacing:0px;">+420 602 743 777</div>
<div class="a " style="left:480px;top:664px;width:136px;height:21px;background:#efefef;border:1px solid #c3c3c3;"></div>
<div class="a " style="left:480px;top:687px;width:136px;height:21px;background:#efefef;border:1px solid #c3c3c3;"></div>
<div class="a " style="left:480px;top:716px;width:136px;height:21px;background:#efefef;border:1px solid #c3c3c3;"></div>
<div class="t" style="left:483px;top:720px;color:#000;letter-spacing:-0.106px;">petr.blok@seznam.cz</div>
<div class="a " style="left:620px;top:716px;width:78px;height:18px;background:#c0c0c0;"></div>
<div class="t" style="left:620px;top:719px;color:#000;width:78px;text-align:center;letter-spacing:-0.26px;">Odeslat E-mail</div>
<div class="a " style="left:480px;top:768px;width:171px;height:21px;background:#efefef;border:1px solid #c3c3c3;"></div>
<div class="t" style="left:483px;top:772px;color:#000;letter-spacing:0px;">17,5454</div>
<div class="a " style="left:1069px;top:114px;width:132px;height:23px;background:#c0c0c0;"></div>
<div class="t" style="left:1079px;top:120px;color:#000;letter-spacing:0.138px;">Tisk, export</div>
<div class="a " style="left:1182px;top:114px;width:1px;height:23px;background:#000;"></div>
<svg style="left:1189px;top:123px" width="7" height="4" viewBox="0 0 7 4"><path d="M0 0 H7 L3.5 4 Z" fill="#000"/></svg>
<div class="a " style="left:1069px;top:142px;width:132px;height:23px;background:#c0c0c0;"></div>
<div class="t" style="left:1079px;top:148px;color:#000;letter-spacing:0.185px;">Nový</div>
<div class="a " style="left:1069px;top:170px;width:132px;height:23px;background:#c0c0c0;"></div>
<div class="t" style="left:1079px;top:176px;color:#000;letter-spacing:0.264px;">Opravit</div>
<div class="a " style="left:1182px;top:170px;width:1px;height:23px;background:#000;"></div>
<svg style="left:1189px;top:179px" width="7" height="4" viewBox="0 0 7 4"><path d="M0 0 H7 L3.5 4 Z" fill="#000"/></svg>
<div class="a " style="left:1069px;top:198px;width:132px;height:23px;background:#c0c0c0;"></div>
<div class="t" style="left:1079px;top:204px;color:#000;letter-spacing:0.013px;">Zkopírovat</div>
<div class="a " style="left:1069px;top:226px;width:132px;height:23px;background:#c0c0c0;"></div>
<div class="t" style="left:1079px;top:232px;color:#000;letter-spacing:-0.012px;">Vymazat</div>
<div class="a " style="left:1069px;top:280px;width:132px;height:23px;background:#c0c0c0;"></div>
<div class="t" style="left:1079px;top:286px;color:#000;letter-spacing:0.089px;">Občerstvit</div>
<div class="a " style="left:1069px;top:308px;width:132px;height:23px;background:#c0c0c0;"></div>
<div class="t" style="left:1079px;top:314px;color:#000;letter-spacing:-0.055px;">Autom. vzkazy</div>
<div class="a " style="left:1182px;top:308px;width:1px;height:23px;background:#000;"></div>
<svg style="left:1189px;top:317px" width="7" height="4" viewBox="0 0 7 4"><path d="M0 0 H7 L3.5 4 Z" fill="#000"/></svg>
<div class="a " style="left:1069px;top:349px;width:132px;height:23px;background:#c0c0c0;"></div>
<div class="t" style="left:1079px;top:355px;color:#000;letter-spacing:-0.461px;">E-mail</div>
<div class="a " style="left:1069px;top:377px;width:132px;height:23px;background:#c0c0c0;"></div>
<div class="t" style="left:1079px;top:383px;color:#000;letter-spacing:0.001px;">Hledat</div>
<div class="a " style="left:1069px;top:405px;width:132px;height:23px;background:#c0c0c0;"></div>
<div class="t" style="left:1079px;top:411px;color:#000;letter-spacing:0.012px;">Aktualizovat kat.</div>
<div class="a " style="left:1182px;top:405px;width:1px;height:23px;background:#000;"></div>
<svg style="left:1189px;top:414px" width="7" height="4" viewBox="0 0 7 4"><path d="M0 0 H7 L3.5 4 Z" fill="#000"/></svg>
<div class="a " style="left:1069px;top:433px;width:132px;height:23px;background:#c0c0c0;"></div>
<div class="t" style="left:1079px;top:439px;color:#8c8c8c;letter-spacing:-0.059px;">Nalézt dat. schránku</div>
<div class="a " style="left:1069px;top:461px;width:132px;height:23px;background:#c0c0c0;"></div>
<div class="t" style="left:1079px;top:467px;color:#000;letter-spacing:-0.16px;">Nespolehlivost</div>
<div class="a " style="left:1182px;top:461px;width:1px;height:23px;background:#000;"></div>
<svg style="left:1189px;top:470px" width="7" height="4" viewBox="0 0 7 4"><path d="M0 0 H7 L3.5 4 Z" fill="#000"/></svg>
<div class="a " style="left:1069px;top:489px;width:132px;height:23px;background:#c0c0c0;"></div>
<div class="t" style="left:1079px;top:495px;color:#000;letter-spacing:-0.175px;">Ověření DIČ</div>
<div class="a " style="left:1182px;top:489px;width:1px;height:23px;background:#000;"></div>
<svg style="left:1189px;top:498px" width="7" height="4" viewBox="0 0 7 4"><path d="M0 0 H7 L3.5 4 Z" fill="#000"/></svg>
<div class="a " style="left:1069px;top:517px;width:132px;height:23px;background:#c0c0c0;"></div>
<div class="t" style="left:1079px;top:523px;color:#000;letter-spacing:-0.176px;">Ověření insolvence</div>
<div class="a " style="left:1182px;top:517px;width:1px;height:23px;background:#000;"></div>
<svg style="left:1189px;top:526px" width="7" height="4" viewBox="0 0 7 4"><path d="M0 0 H7 L3.5 4 Z" fill="#000"/></svg>
</body></html>
